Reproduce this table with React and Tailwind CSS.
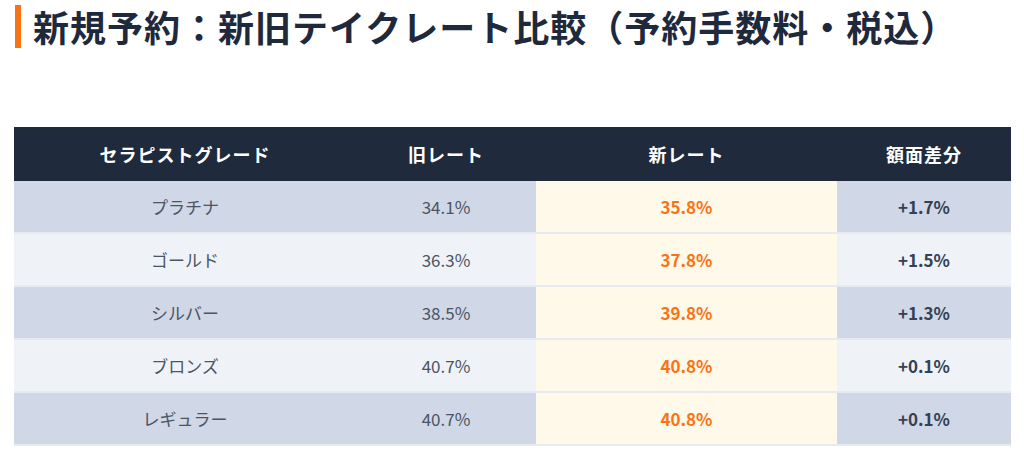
const rows = [
  { grade: "プラチナ", oldRate: "34.1%", newRate: "35.8%", diff: "+1.7%" },
  { grade: "ゴールド", oldRate: "36.3%", newRate: "37.8%", diff: "+1.5%" },
  { grade: "シルバー", oldRate: "38.5%", newRate: "39.8%", diff: "+1.3%" },
  { grade: "ブロンズ", oldRate: "40.7%", newRate: "40.8%", diff: "+0.1%" },
  { grade: "レギュラー", oldRate: "40.7%", newRate: "40.8%", diff: "+0.1%" },
];

export default function App() {
  return (
    <div
      className="w-[1024px] h-[458px] bg-white overflow-hidden"
      style={{ fontFamily: '"Noto Sans CJK JP", "Noto Sans", sans-serif' }}
    >
      {/* heading */}
      <div className="flex items-center pt-[5px] pl-[15px] gap-[12px]">
        <div className="w-[6px] h-[43px] bg-[#f97316]" />
        <h1 className="text-[36px] leading-[43px] font-bold tracking-[1px] text-[#1e293b]">
          新規予約：新旧テイクレート比較（予約手数料・税込）
        </h1>
      </div>

      {/* table */}
      <div className="mt-[79px] mx-[14px] w-[997px]">
        <div className="grid grid-cols-[342px_180px_301px_174px] h-[54px] bg-[#1f2a3c] text-white text-[18px] tracking-[1px] font-bold">
          <div className="flex items-center justify-center">セラピストグレード</div>
          <div className="flex items-center justify-center">旧レート</div>
          <div className="flex items-center justify-center">新レート</div>
          <div className="flex items-center justify-center">額面差分</div>
        </div>
        {rows.map((r, i) => (
          <div
            key={r.grade}
            className={`grid grid-cols-[342px_180px_301px_174px] h-[53px] border-b-2 border-[#e6eaf1] text-[17px] ${
              i % 2 === 0 ? "bg-[#d0d7e6]" : "bg-[#eff3f8]"
            }`}
          >
            <div className="flex items-center justify-center text-[#4b5563]">{r.grade}</div>
            <div className="flex items-center justify-center text-[#4b5563]">{r.oldRate}</div>
            <div className="flex items-center justify-center bg-[#fef9e8] text-[#f97316] font-bold">
              {r.newRate}
            </div>
            <div className="flex items-center justify-center text-[#334155] font-bold">{r.diff}</div>
          </div>
        ))}
      </div>
    </div>
  );
}
